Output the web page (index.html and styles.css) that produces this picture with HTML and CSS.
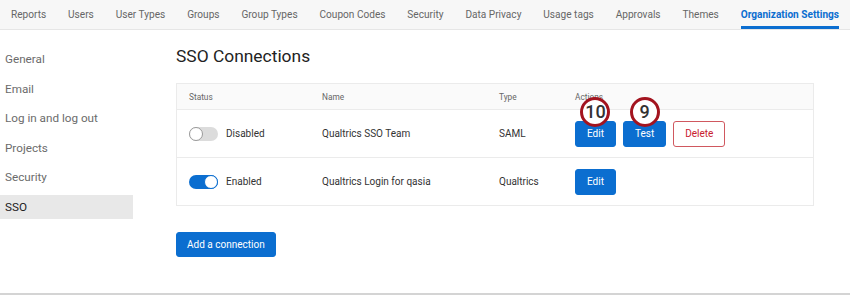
FILE: index.html
```html
<!DOCTYPE html>
<html lang="en">
<head>
    <meta charset="UTF-8">
    <title>Organization Settings</title>
    <link rel="stylesheet" href="styles.css">
</head>
<body>
    <ul class="tabs">
        <li>Reports</li>
        <li>Users</li>
        <li>User Types</li>
        <li>Groups</li>
        <li>Group Types</li>
        <li>Coupon Codes</li>
        <li>Security</li>
        <li>Data Privacy</li>
        <li>Usage tags</li>
        <li>Approvals</li>
        <li>Themes</li>
        <li class="active">Organization Settings</li>
    </ul>
    <div class="page">
        <ul class="side">
            <li>General</li>
            <li>Email</li>
            <li>Log in and log out</li>
            <li>Projects</li>
            <li>Security</li>
            <li class="active">SSO</li>
        </ul>
        <div class="main">
            <h2>SSO Connections</h2>
            <div class="table">
                <div class="row head">
                    <div>Status</div>
                    <div>Name</div>
                    <div>Type</div>
                    <div>Actions</div>
                </div>
                <div class="row">
                    <div class="status"><span class="toggle"></span>Disabled</div>
                    <div>Qualtrics SSO Team</div>
                    <div>SAML</div>
                    <div class="actions">
                        <button class="btn">Edit<span class="badge">10</span></button>
                        <button class="btn">Test<span class="badge">9</span></button>
                        <button class="btn danger">Delete</button>
                    </div>
                </div>
                <div class="row">
                    <div class="status"><span class="toggle on"></span>Enabled</div>
                    <div>Qualtrics Login for qasia</div>
                    <div>Qualtrics</div>
                    <div class="actions">
                        <button class="btn">Edit</button>
                    </div>
                </div>
            </div>
            <button class="btn add">Add a connection</button>
        </div>
    </div>
</body>
</html>
```

FILE: styles.css
```css
body{
    margin: 0;
    font-family: Roboto, "Open Sans", sans-serif;
    color: #333;
    background: #fff;
    height: 295px;
    box-sizing: border-box;
    border-bottom: 2px solid #d4d4d4;
    overflow: hidden;
}
ul{
    margin: 0;
    padding: 0;
}
li{
    list-style: none;
}
.tabs{
    display: flex;
    gap: 21.9px;
    height: 29px;
    padding-left: 11px;
    background: #f7f7f7;
    border-bottom: 1px solid #e6e6e6;
    font-size: 10.1px;
    color: #666;
    white-space: nowrap;
}
.tabs li{
    line-height: 29px;
    border-bottom: 3px solid transparent;
    height: 26px;
}
.tabs li.active{
    color: #0b6ed0;
    font-weight: 700;
    border-bottom-color: #0b6ed0;
}
.page{
    display: flex;
}
.side{
    width: 133px;
    padding-top: 17px;
    font-size: 11.7px;
    color: #6b6b6b;
}
.side li{
    height: 24px;
    line-height: 24px;
    padding-left: 5px;
    margin-bottom: 5.6px;
}
.side li.active{
    background: #e8e8e8;
    color: #222;
}
.main{
    margin-left: 43px;
    width: 638px;
}
.main h2{
    margin: 14px 0 0;
    height: 39px;
    font-size: 17.4px;
    font-weight: 400;
    line-height: 24px;
    color: #222;
}
.table{
    border: 1px solid #ebebeb;
}
.row{
    display: grid;
    grid-template-columns: 133px 177px 76px 1fr;
    align-items: center;
    height: 47px;
    font-size: 10px;
    border-top: 1px solid #ebebeb;
}
.row > div{
    padding-left: 12px;
}
.row.head{
    height: 25px;
    border-top: none;
    background: #fafafa;
    font-size: 8.3px;
    color: #666;
}
.status{
    display: flex;
    align-items: center;
    gap: 8px;
}
.toggle{
    position: relative;
    width: 29px;
    height: 14px;
    border-radius: 7px;
    background: #dcdcdc;
}
.toggle::after{
    content: "";
    position: absolute;
    left: 0;
    top: 0;
    width: 12px;
    height: 12px;
    border-radius: 50%;
    background: #fff;
    border: 1px solid #9a9a9a;
}
.toggle.on{
    background: #0b6ed0;
}
.toggle.on::after{
    left: auto;
    right: 0;
    border-color: #0b6ed0;
}
.actions{
    display: flex;
    gap: 7px;
}
.btn{
    position: relative;
    height: 26px;
    padding: 0 11px;
    border: 1px solid #0b6ed0;
    border-radius: 3px;
    background: #0b6ed0;
    color: #fff;
    font-family: inherit;
    font-size: 10px;
}
.btn.danger{
    background: #fff;
    color: #c8202f;
    border-color: #d0585f;
}
.btn.add{
    margin-top: 26px;
    height: 25px;
    padding: 0 10px;
}
.badge{
    position: absolute;
    top: -25px;
    left: 50%;
    transform: translateX(-50%);
    width: 24px;
    height: 24px;
    border: 3px solid #a3141f;
    border-radius: 50%;
    background: #fff;
    color: #333;
    font-size: 18px;
    font-weight: 500;
    line-height: 24px;
    text-align: center;
}
```
